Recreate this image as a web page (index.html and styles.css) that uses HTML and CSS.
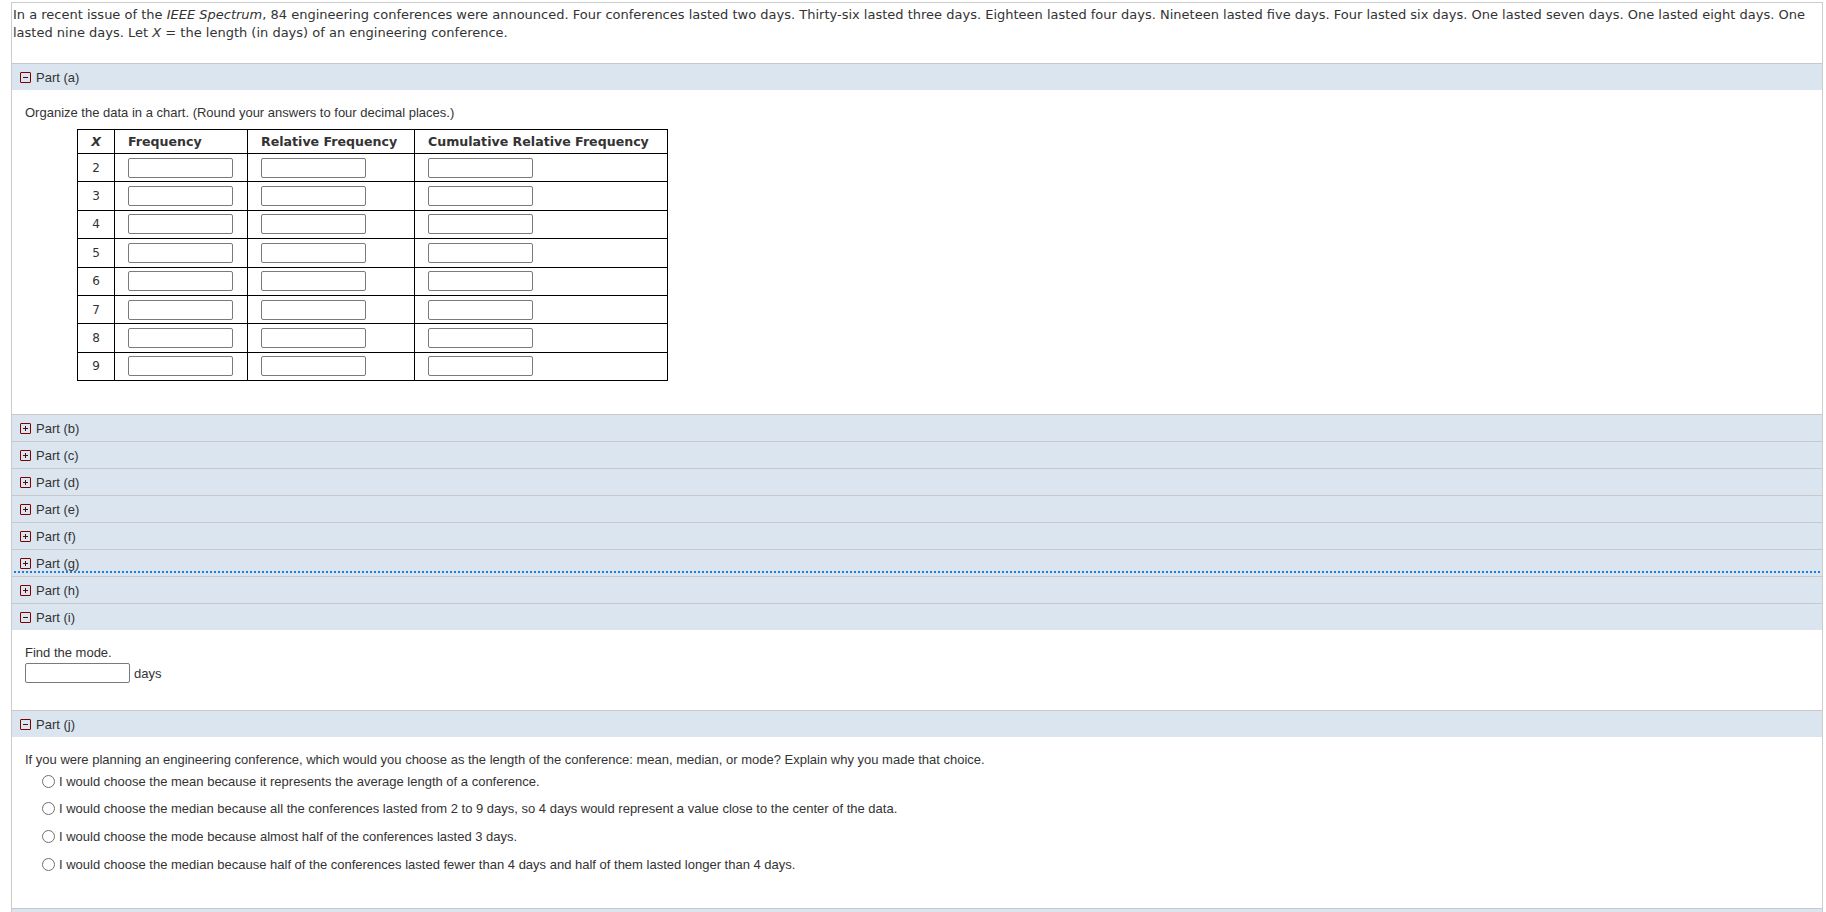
FILE: index.html
```html
<!DOCTYPE html>
<html lang="en">
<head>
<meta charset="utf-8">
<title>Engineering conferences</title>
<link rel="stylesheet" href="styles.css">
</head>
<body>
<div class="question">
  <div class="intro">In a recent issue of the <i>IEEE Spectrum</i>, 84 engineering conferences were announced. Four conferences lasted two days. Thirty-six lasted three days. Eighteen lasted four days. Nineteen lasted five days. Four lasted six days. One lasted seven days. One lasted eight days. One lasted nine days. Let <i>X</i> = the length (in days) of an engineering conference.</div>

  <div class="part">
    <div class="part-head">
      <svg class="toggle" viewBox="0 0 11 11" width="11" height="11"><rect x="0.5" y="0.5" width="10" height="10" rx="0.5"/><path d="M3 5.5h5"/></svg>
      <span class="part-label">Part (a)</span>
    </div>
    <div class="part-body body-a">
      <p class="prompt">Organize the data in a chart. (Round your answers to four decimal places.)</p>
      <table class="chart">
        <thead>
          <tr><th class="col-x"><i>X</i></th><th class="col-f">Frequency</th><th class="col-r">Relative Frequency</th><th class="col-c">Cumulative Relative Frequency</th></tr>
        </thead>
        <tbody>
          <tr><td class="num">2</td><td><span class="box"></span></td><td><span class="box"></span></td><td><span class="box"></span></td></tr>
          <tr><td class="num">3</td><td><span class="box"></span></td><td><span class="box"></span></td><td><span class="box"></span></td></tr>
          <tr><td class="num">4</td><td><span class="box"></span></td><td><span class="box"></span></td><td><span class="box"></span></td></tr>
          <tr><td class="num">5</td><td><span class="box"></span></td><td><span class="box"></span></td><td><span class="box"></span></td></tr>
          <tr><td class="num">6</td><td><span class="box"></span></td><td><span class="box"></span></td><td><span class="box"></span></td></tr>
          <tr><td class="num">7</td><td><span class="box"></span></td><td><span class="box"></span></td><td><span class="box"></span></td></tr>
          <tr><td class="num">8</td><td><span class="box"></span></td><td><span class="box"></span></td><td><span class="box"></span></td></tr>
          <tr><td class="num">9</td><td><span class="box"></span></td><td><span class="box"></span></td><td><span class="box"></span></td></tr>
        </tbody>
      </table>
    </div>
  </div>

  <div class="part">
    <div class="part-head"><svg class="toggle" viewBox="0 0 11 11" width="11" height="11"><rect x="0.5" y="0.5" width="10" height="10" rx="0.5"/><path d="M3 5.5h5M5.5 3v5"/></svg><span class="part-label">Part (b)</span></div>
  </div>
  <div class="part">
    <div class="part-head"><svg class="toggle" viewBox="0 0 11 11" width="11" height="11"><rect x="0.5" y="0.5" width="10" height="10" rx="0.5"/><path d="M3 5.5h5M5.5 3v5"/></svg><span class="part-label">Part (c)</span></div>
  </div>
  <div class="part">
    <div class="part-head"><svg class="toggle" viewBox="0 0 11 11" width="11" height="11"><rect x="0.5" y="0.5" width="10" height="10" rx="0.5"/><path d="M3 5.5h5M5.5 3v5"/></svg><span class="part-label">Part (d)</span></div>
  </div>
  <div class="part">
    <div class="part-head"><svg class="toggle" viewBox="0 0 11 11" width="11" height="11"><rect x="0.5" y="0.5" width="10" height="10" rx="0.5"/><path d="M3 5.5h5M5.5 3v5"/></svg><span class="part-label">Part (e)</span></div>
  </div>
  <div class="part">
    <div class="part-head"><svg class="toggle" viewBox="0 0 11 11" width="11" height="11"><rect x="0.5" y="0.5" width="10" height="10" rx="0.5"/><path d="M3 5.5h5M5.5 3v5"/></svg><span class="part-label">Part (f)</span></div>
  </div>
  <div class="part">
    <div class="part-head focused"><svg class="toggle" viewBox="0 0 11 11" width="11" height="11"><rect x="0.5" y="0.5" width="10" height="10" rx="0.5"/><path d="M3 5.5h5M5.5 3v5"/></svg><span class="part-label">Part (g)</span></div>
  </div>
  <div class="part">
    <div class="part-head"><svg class="toggle" viewBox="0 0 11 11" width="11" height="11"><rect x="0.5" y="0.5" width="10" height="10" rx="0.5"/><path d="M3 5.5h5M5.5 3v5"/></svg><span class="part-label">Part (h)</span></div>
  </div>

  <div class="part">
    <div class="part-head"><svg class="toggle" viewBox="0 0 11 11" width="11" height="11"><rect x="0.5" y="0.5" width="10" height="10" rx="0.5"/><path d="M3 5.5h5"/></svg><span class="part-label">Part (i)</span></div>
    <div class="part-body body-i">
      <p class="prompt">Find the mode.</p>
      <div class="answer-line"><span class="box"></span><span class="unit">days</span></div>
    </div>
  </div>

  <div class="part">
    <div class="part-head"><svg class="toggle" viewBox="0 0 11 11" width="11" height="11"><rect x="0.5" y="0.5" width="10" height="10" rx="0.5"/><path d="M3 5.5h5"/></svg><span class="part-label">Part (j)</span></div>
    <div class="part-body body-j">
      <p class="prompt">If you were planning an engineering conference, which would you choose as the length of the conference: mean, median, or mode? Explain why you made that choice.</p>
      <ul class="options">
        <li class="option"><span class="radio"></span><span>I would choose the mean because it represents the average length of a conference.</span></li>
        <li class="option"><span class="radio"></span><span>I would choose the median because all the conferences lasted from 2 to 9 days, so 4 days would represent a value close to the center of the data.</span></li>
        <li class="option"><span class="radio"></span><span>I would choose the mode because almost half of the conferences lasted 3 days.</span></li>
        <li class="option"><span class="radio"></span><span>I would choose the median because half of the conferences lasted fewer than 4 days and half of them lasted longer than 4 days.</span></li>
      </ul>
    </div>
  </div>

  <div class="part">
    <div class="part-head stub"></div>
  </div>
</div>
</body>
</html>
```

FILE: styles.css
```css
html, body {
  margin: 0;
  padding: 0;
  background: #ffffff;
  overflow: hidden;
}

body {
  font-family: "Liberation Sans", Arial, sans-serif;
  font-size: 13px;
  color: #333333;
}

.question {
  margin: 2px 3px 0 11px;
  border: 1px solid #cccccc;
  border-bottom: none;
}

.intro {
  font-family: "DejaVu Sans", Verdana, sans-serif;
  font-size: 13px;
  line-height: 18px;
  color: #333333;
  padding: 3px 0 21px 1px;
}

.part-head {
  position: relative;
  display: flex;
  align-items: center;
  height: 26px;
  border-top: 1px solid #c8c8c8;
  background: #dae5ef;
  padding-left: 8px;
}

.part-head.focused::after {
  content: "";
  position: absolute;
  left: 2px;
  right: 2px;
  bottom: 3px;
  border-bottom: 2px dotted #1b7ed8;
}

.toggle {
  flex: none;
  margin-right: 5px;
}

.toggle rect {
  fill: none;
  stroke: #800000;
  stroke-width: 1;
}

.toggle path {
  stroke: #4a1010;
  stroke-width: 1;
  fill: none;
}

.part-label {
  font-size: 13px;
  color: #333333;
  line-height: 15px;
}

.part-body {
  padding: 15px 13px 0 13px;
}

.prompt {
  margin: 0;
  line-height: 15px;
}

.body-a {
  padding-bottom: 33px;
}

.chart {
  border-collapse: collapse;
  margin: 9px 0 0 52px;
}

.chart th,
.chart td {
  border: 1px solid #000000;
  padding: 0 0 0 13px;
  text-align: left;
  vertical-align: middle;
}

.chart th {
  height: 23px;
  font-family: "DejaVu Sans", Verdana, sans-serif;
  font-size: 12.6px;
  font-weight: bold;
  color: #333333;
  white-space: nowrap;
}

.chart td {
  height: 27.4px;
}

.chart .col-x { width: 36px; padding: 0; text-align: center; }
.chart .col-f { width: 119px; }
.chart .col-r { width: 153px; }
.chart .col-c { width: 239px; }

.chart td.num {
  padding: 0;
  text-align: center;
  font-family: "DejaVu Sans", Verdana, sans-serif;
  font-size: 12px;
}

.box {
  display: inline-block;
  box-sizing: border-box;
  width: 105px;
  height: 20px;
  border: 1px solid #7a7a7a;
  border-radius: 2px;
  background: #ffffff;
  vertical-align: middle;
}

.body-i {
  padding-bottom: 27px;
}

.answer-line {
  display: flex;
  align-items: center;
  margin-top: 3px;
}

.unit {
  margin-left: 4px;
}

.body-j {
  padding-bottom: 30px;
}

.options {
  list-style: none;
  margin: 0;
  padding: 0 0 0 17px;
}

.option {
  display: flex;
  align-items: center;
  height: 27.8px;
  font-size: 13px;
}

.radio {
  flex: none;
  box-sizing: border-box;
  width: 13px;
  height: 13px;
  border: 1px solid #6f6f6f;
  border-radius: 50%;
  background: #ffffff;
  margin-right: 4px;
}
```
